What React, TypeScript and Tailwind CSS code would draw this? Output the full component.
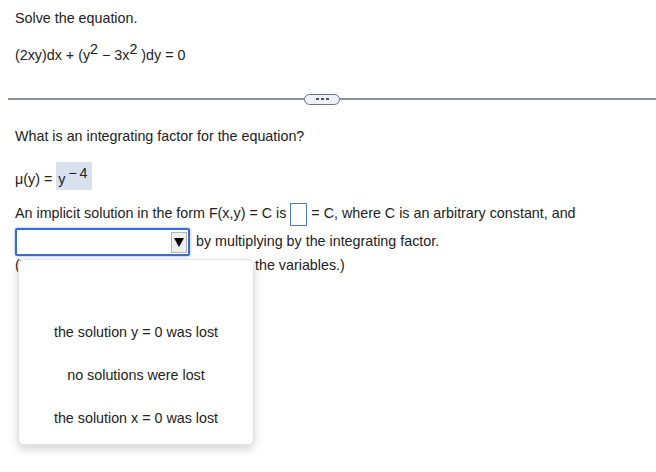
import React from "react";

export default function App() {
  return (
    <div
      className="relative w-[656px] h-[472px] bg-white text-[14.3px] text-[#222]"
      style={{ fontFamily: '"Liberation Sans", Arial, sans-serif' }}
    >
      <div className="pl-[15px] pt-2">
        <div className="h-5 leading-5">Solve the equation.</div>
        <div className="mt-[17px] h-5 leading-5">
          (2xy)dx + (y<span className="relative -top-[6px]">2</span> − 3x
          <span className="relative -top-[6px]">2</span> )dy = 0
        </div>
      </div>

      {/* separator with pill */}
      <div className="mt-[28px] ml-2 flex items-center h-[12px]">
        <div className="w-[296px] h-[2px] bg-[#8a8fa3]" />
        <div className="w-[36px] h-[11px] rounded-full border border-[#6b7386] bg-[#eef1f6] flex items-center justify-center gap-[2px]">
          <span className="w-[3px] h-[2px] bg-[#4a5568]" />
          <span className="w-[3px] h-[2px] bg-[#4a5568]" />
          <span className="w-[3px] h-[2px] bg-[#4a5568]" />
        </div>
        <div className="flex-1 h-[2px] bg-[#8a8fa3]" />
      </div>

      <div className="pl-[15px]">
        <div className="mt-[21px] h-5 leading-5">What is an integrating factor for the equation?</div>

        <div className="mt-[16px] flex items-end h-[28px]">
          <span className="leading-5 mb-[1px]">μ(y) = </span>
          <span className="ml-[4px] h-[28px] pl-[2px] pr-[4px] bg-[#d9e1ef] flex items-end">
            <span className="leading-5 mb-[1px]">y</span>
            <span className="self-start mt-[3px] leading-4 ml-[3px]">−&#8201;4</span>
          </span>
        </div>

        <div className="mt-[12px] flex items-center h-[24px]">
          <span>An implicit solution in the form F(x,y) = C is</span>
          <span className="ml-[4px] w-[17px] h-[23px] border border-[#4a7bd0] bg-white" />
          <span className="ml-[4px]">= C, where C is an arbitrary constant, and</span>
        </div>

        <div className="mt-[2px] flex items-center h-[28px]">
          <div className="w-[175px] h-[28px] border-2 border-[#3a6ad4] rounded-[2px] shadow-[0_0_3px_#8fb0ee] bg-white flex items-center justify-end pr-[1px]">
            <div className="w-[16px] h-[21px] bg-[#efefef] border border-[#b5b5b5] flex items-center justify-center">
              <svg width="10" height="9" viewBox="0 0 10 9">
                <polygon points="0,0 10,0 5,9" fill="#000" />
              </svg>
            </div>
          </div>
          <span className="ml-[6px]">by multiplying by the integrating factor.</span>
        </div>

        <div className="-mt-[1px] h-5 leading-5 text-[#222]">
          (Type an expression using x and y as the variables.)
        </div>
      </div>

      {/* dropdown popup */}
      <div className="absolute left-[18px] top-[259px] w-[236px] h-[186px] bg-white rounded-[6px] border border-[#e3e3e3] shadow-[0_4px_10px_rgba(0,0,0,0.18)] flex flex-col items-center pt-[62px] gap-[23px] text-[#222]">
        <div className="h-5 leading-5">the solution y = 0 was lost</div>
        <div className="h-5 leading-5">no solutions were lost</div>
        <div className="h-5 leading-5">the solution x = 0 was lost</div>
      </div>
    </div>
  );
}
